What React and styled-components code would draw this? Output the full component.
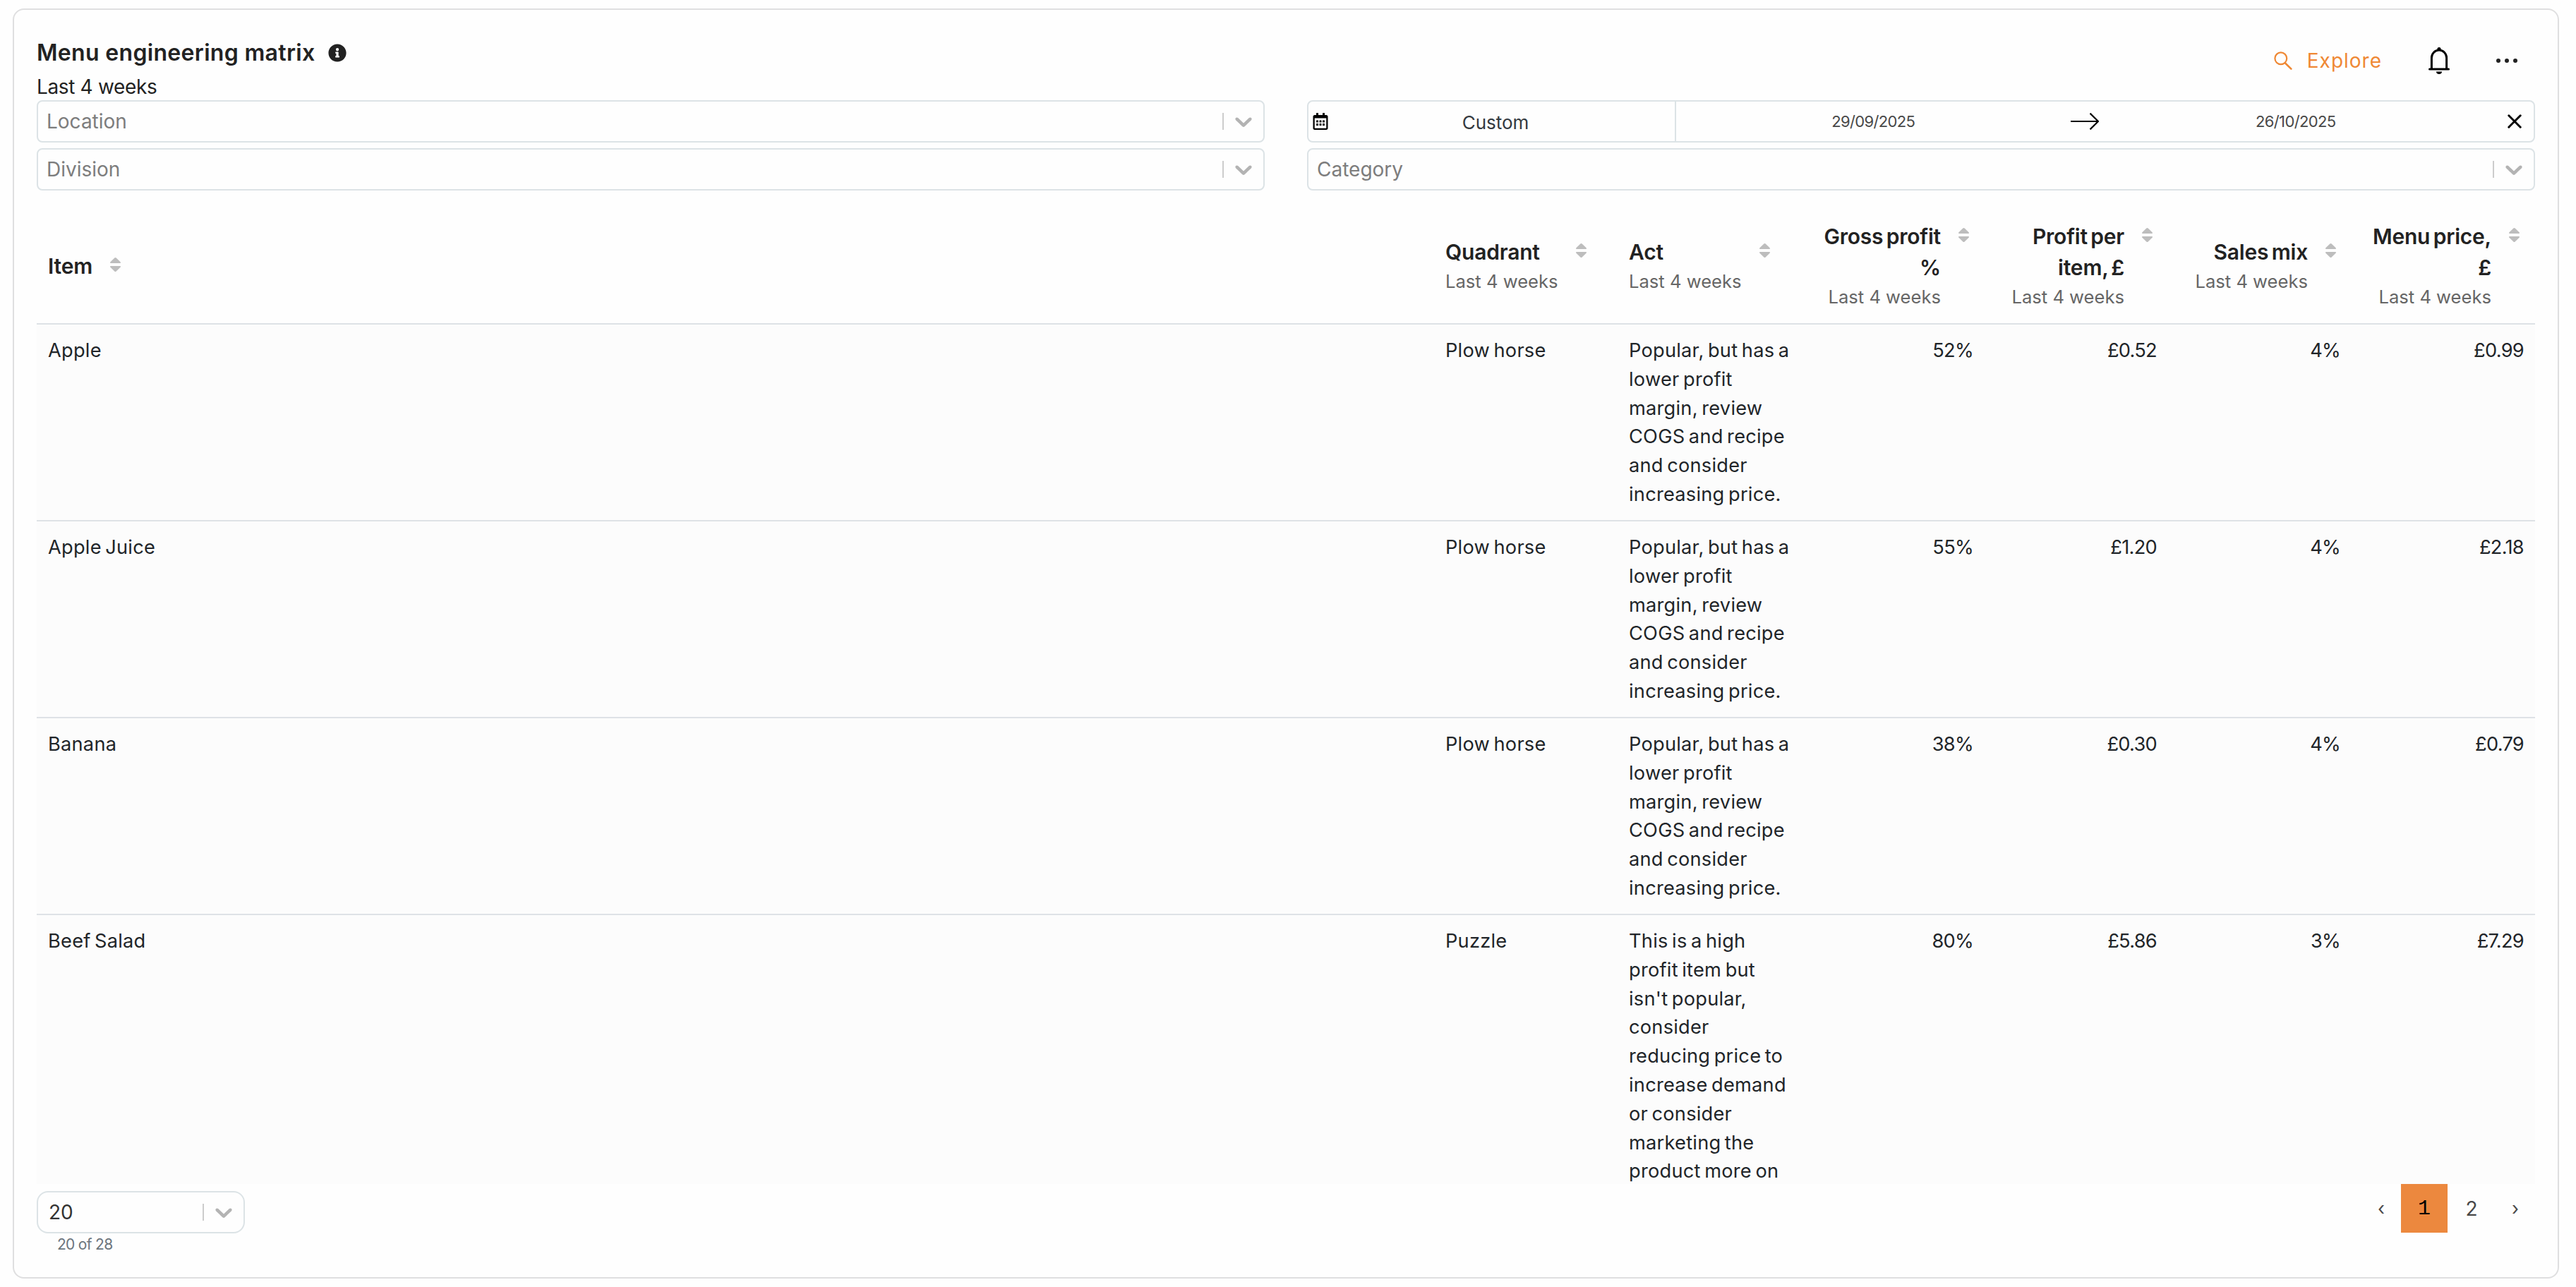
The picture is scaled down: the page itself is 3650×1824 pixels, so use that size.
import React from 'react';
import styled, { createGlobalStyle } from 'styled-components';
import { FaInfoCircle, FaRegCalendarAlt } from 'react-icons/fa';

const LOWER_PROFIT = 'Popular, but has a lower profit margin, review COGS and recipe and consider increasing price.';
const LOW_POPULARITY = "This is a high profit item but isn't popular, consider reducing price to increase demand or consider marketing the product more on";

const columns = [
    { title: 'Quadrant' },
    { title: 'Act' },
    { title: 'Gross profit %', numeric: true },
    { title: 'Profit per item, £', numeric: true },
    { title: 'Sales mix', numeric: true },
    { title: 'Menu price, £', numeric: true },
];

const rows = [
    { item: 'Apple', quadrant: 'Plow horse', act: LOWER_PROFIT, values: ['52%', '£0.52', '4%', '£0.99'] },
    { item: 'Apple Juice', quadrant: 'Plow horse', act: LOWER_PROFIT, values: ['55%', '£1.20', '4%', '£2.18'] },
    { item: 'Banana', quadrant: 'Plow horse', act: LOWER_PROFIT, values: ['38%', '£0.30', '4%', '£0.79'] },
    { item: 'Beef Salad', quadrant: 'Puzzle', act: LOW_POPULARITY, values: ['80%', '£5.86', '3%', '£7.29'] },
];

const Chevron = () => (
    <svg width="40" height="40" viewBox="0 0 20 20" fill="#b3b3b3">
        <path d="M4.516 7.548c0.436-0.446 1.043-0.481 1.576 0l3.908 3.747 3.908-3.747c0.533-0.481 1.141-0.446 1.574 0 0.436 0.445 0.408 1.197 0 1.615-0.406 0.418-4.695 4.502-4.695 4.502-0.217 0.223-0.502 0.335-0.787 0.335s-0.57-0.112-0.789-0.335c0 0-4.287-4.084-4.695-4.502s-0.436-1.17 0-1.615z" />
    </svg>
);

const SearchIcon = () => (
    <svg width="26" height="26" viewBox="0 0 26 26" fill="none" stroke="#ef8834" strokeWidth="2.2" strokeLinecap="round">
        <circle cx="9.8" cy="9.8" r="8.4" />
        <path d="M15.8 16.2L24.4 24.6" strokeWidth="2.6" />
    </svg>
);

const BellIcon = () => (
    <svg width="30" height="38" viewBox="0 0 30 38" fill="none">
        <path d="M12.4 4V2.6a2.6 2.6 0 0 1 5.2 0V4z" fill="#000" />
        <path d="M4.4 30.5V15a10.6 10.9 0 0 1 21.2 0v15.5" stroke="#000" strokeWidth="3" />
        <path d="M1.5 31h27" stroke="#000" strokeWidth="3" strokeLinecap="round" />
        <path d="M11 34.6h8a4 3.4 0 0 1-8 0z" fill="#000" />
    </svg>
);

const DotsIcon = () => (
    <svg width="30" height="6" viewBox="0 0 30 6" fill="#222">
        <circle cx="3" cy="3" r="3" />
        <circle cx="15" cy="3" r="3" />
        <circle cx="27" cy="3" r="3" />
    </svg>
);

const ArrowIcon = () => (
    <svg width="40" height="24" viewBox="0 0 40 24" fill="none" stroke="#000" strokeWidth="2.2">
        <path d="M0 12H39M27.5 0.6L39 12L27.5 23.4" />
    </svg>
);

const CloseIcon = () => (
    <svg width="20" height="20" viewBox="0 0 20 20" fill="none" stroke="#000" strokeWidth="3" strokeLinecap="round">
        <path d="M1.8 1.8L18.2 18.2M18.2 1.8L1.8 18.2" />
    </svg>
);

const SortIcon = () => (
    <SortSvg width="15" height="20" viewBox="0 0 15 20" fill="#bdbdbd">
        <path d="M6.3 0.5Q7.5 -0.5 8.7 0.5L14.6 6.3Q15.6 8 14 8H1Q-0.6 8 0.4 6.3Z" />
        <path d="M6.3 19.5Q7.5 20.5 8.7 19.5L14.6 13.7Q15.6 12 14 12H1Q-0.6 12 0.4 13.7Z" />
    </SortSvg>
);

const Select = ({ placeholder }) => (
    <SelectBox>
        <Placeholder>{placeholder}</Placeholder>
        <Separator />
        <Chevron />
    </SelectBox>
);

const HeaderCell = ({ title, period, numeric }) => (
    <HeadCell $numeric={numeric}>
        <HeadContent>
            <HeadText>
                <HeadTitle>{title}</HeadTitle>
                {period && <HeadPeriod>{period}</HeadPeriod>}
            </HeadText>
            <SortIcon />
        </HeadContent>
    </HeadCell>
);

const App = () => {
    return (
        <Page>
            <GlobalStyle />
            <Card>
                <CardHeader>
                    <div>
                        <Title>
                            Menu engineering matrix
                            <FaInfoCircle size={26} />
                        </Title>
                        <Period>Last 4 weeks</Period>
                    </div>
                    <Actions>
                        <ExploreButton>
                            <SearchIcon />
                            Explore
                        </ExploreButton>
                        <BellIcon />
                        <DotsIcon />
                    </Actions>
                </CardHeader>

                <Filters>
                    <Select placeholder="Location" />
                    <DateRange>
                        <Preset>
                            <FaRegCalendarAlt size={24} color="#000" />
                            <PresetName>Custom</PresetName>
                        </Preset>
                        <Dates>
                            <DateValue>29/09/2025</DateValue>
                            <ArrowIcon />
                            <DateValue>26/10/2025</DateValue>
                            <CloseIcon />
                        </Dates>
                    </DateRange>
                    <Select placeholder="Division" />
                    <Select placeholder="Category" />
                </Filters>

                <Table>
                    <HeadRow>
                        <HeaderCell title="Item" />
                        {columns.map((column) => (
                            <HeaderCell key={column.title} period="Last 4 weeks" {...column} />
                        ))}
                    </HeadRow>
                    {rows.map((row) => (
                        <Row key={row.item}>
                            <Cell>{row.item}</Cell>
                            <Cell>{row.quadrant}</Cell>
                            <Cell>{row.act}</Cell>
                            {row.values.map((value, i) => (
                                <Cell key={i} $numeric>{value}</Cell>
                            ))}
                        </Row>
                    ))}
                </Table>

                <Footer>
                    <div>
                        <PageSize>
                            <PageSizeValue>20</PageSizeValue>
                            <Separator />
                            <Chevron />
                        </PageSize>
                        <Count>20 of 28</Count>
                    </div>
                    <Pagination>
                        <PageArrow>‹</PageArrow>
                        <PageButton $active>1</PageButton>
                        <PageButton>2</PageButton>
                        <PageArrow>›</PageArrow>
                    </Pagination>
                </Footer>
            </Card>
        </Page>
    );
};

export default App;

// Styled Components
const GlobalStyle = createGlobalStyle`
    * {
        box-sizing: border-box;
    }

    body {
        margin: 0;
        background: #fefefe;
        color: #212529;
        font-family: Inter, "Liberation Sans", sans-serif;
        font-size: 28px;
    }

    svg {
        display: block;
        flex-shrink: 0;
    }
`;

const Page = styled.div`
    height: 1824px;
    padding: 12px 24px 12px 18px;
`;

const Card = styled.section`
    display: flex;
    flex-direction: column;
    height: 1800px;
    padding: 0 32px;
    border: 2px solid #dfdfe0;
    border-radius: 16px;
    background: #fefefe;
`;

const CardHeader = styled.header`
    display: flex;
    justify-content: space-between;
    height: 128px;
    padding-top: 39px;
`;

const Title = styled.h1`
    display: flex;
    align-items: center;
    gap: 19px;
    margin: 0;
    font-size: 32px;
    line-height: 44px;
    font-weight: 600;
    letter-spacing: 0.32px;
    color: #222;

    svg {
        margin-bottom: 1px;
    }
`;

const Period = styled.div`
    margin-top: 6px;
    line-height: 40px;
    letter-spacing: -0.35px;
    color: #222;
`;

const Actions = styled.div`
    display: flex;
    align-items: center;
    height: 44px;
    margin-top: 11px;
    padding-right: 25px;

    > svg {
        margin-left: 66px;
    }
`;

const ExploreButton = styled.span`
    display: flex;
    align-items: center;
    gap: 21px;
    line-height: 40px;
    letter-spacing: 1px;
    color: #ef8834;
`;

const Filters = styled.div`
    display: grid;
    grid-template-columns: repeat(2, 1740px);
    grid-auto-rows: 60px;
    gap: 8px 60px;
`;

const SelectBox = styled.div`
    display: flex;
    align-items: center;
    height: 60px;
    padding: 0 8px 0 12px;
    border: 2px solid #dce3e6;
    border-radius: 8px;
    background: #fefefe;
`;

const Placeholder = styled.span`
    flex: 1;
    line-height: 40px;
    color: #7d7d7d;
`;

const Separator = styled.span`
    width: 2px;
    height: 24px;
    margin-right: 8px;
    background: #ccc;
`;

const DateRange = styled.div`
    display: flex;
    height: 60px;
    border: 2px solid #dce3e6;
    border-radius: 8px;
    background: #fefefe;
`;

const Preset = styled.div`
    display: flex;
    align-items: center;
    width: 521px;
    padding-left: 5px;
    border-right: 2px solid #dce3e6;
`;

const PresetName = styled.span`
    flex: 1;
    padding: 3px 18px 0 0;
    text-align: center;
    font-size: 26px;
    color: #343a40;
`;

const Dates = styled.div`
    display: flex;
    flex: 1;
    align-items: center;
    padding-right: 17px;

    svg:last-child {
        margin-left: 21px;
    }
`;

const DateValue = styled.span`
    flex: 1;
    text-align: center;
    font-size: 22px;
    letter-spacing: -0.65px;
    color: #484848;
`;

const Table = styled.div`
    height: 1382px;
    margin-top: 26px;
    overflow: hidden;
`;

const HeadRow = styled.div`
    display: grid;
    grid-template-columns: 1fr repeat(6, 260px);
    height: 162px;
`;

const HeadCell = styled.div`
    display: flex;
    align-items: center;
    justify-content: ${(props) => (props.$numeric ? 'flex-end' : 'flex-start')};
    padding: 0 ${(props) => (props.$numeric ? '22px' : '16px')} 0 16px;
    text-align: ${(props) => (props.$numeric ? 'right' : 'left')};
`;

const HeadContent = styled.div`
    display: flex;
    align-items: flex-start;
`;

const HeadText = styled.div`
    max-width: 182px;
`;

const HeadTitle = styled.div`
    font-size: 30px;
    line-height: 44px;
    font-weight: 600;
    letter-spacing: -0.2px;
    word-spacing: -3px;
    color: #222;
`;

const HeadPeriod = styled.div`
    font-size: 25.6px;
    line-height: 40px;
    white-space: nowrap;
    color: #666;
`;

const SortSvg = styled.svg`
    margin: 10px 0 0 25px;
`;

const Row = styled.div`
    display: grid;
    grid-template-columns: 1fr repeat(6, 260px);
    min-height: 279px;
    border-top: 2px solid #dee2e6;
    background: #fcfcfc;
`;

const Cell = styled.div`
    padding: 17px 16px 15px;
    font-size: 27.2px;
    line-height: 40.8px;
    letter-spacing: ${(props) => (props.$numeric ? '-0.7px' : '0.25px')};
    word-spacing: -2.4px;
    text-align: ${(props) => (props.$numeric ? 'right' : 'left')};
`;

const Footer = styled.footer`
    display: flex;
    justify-content: space-between;
`;

const PageSize = styled.div`
    display: flex;
    align-items: center;
    width: 295px;
    height: 60px;
    margin-top: 10px;
    padding: 0 8px 0 15px;
    border: 2px solid #dce3e6;
    border-radius: 16px;
`;

const PageSizeValue = styled.span`
    flex: 1;
    color: #333;
`;

const Count = styled.div`
    padding-left: 29px;
    font-size: 21px;
    line-height: 32px;
    letter-spacing: -0.7px;
    color: #6c757d;
`;

const Pagination = styled.nav`
    display: flex;
    color: #484848;
`;

const PageButton = styled.span`
    display: flex;
    align-items: center;
    justify-content: center;
    width: ${(props) => (props.$active ? '66px' : '68px')};
    height: 69px;
    background: ${(props) => (props.$active ? '#ec883e' : 'transparent')};
    color: ${(props) => (props.$active ? '#000' : 'inherit')};
    font-family: ${(props) => (props.$active ? '"Liberation Mono", monospace' : 'inherit')};
    font-size: ${(props) => (props.$active ? '30px' : '28px')};
`;

const PageArrow = styled.span`
    display: flex;
    align-items: center;
    justify-content: center;
    width: 56px;
    height: 69px;
    font-size: 26px;
`;
